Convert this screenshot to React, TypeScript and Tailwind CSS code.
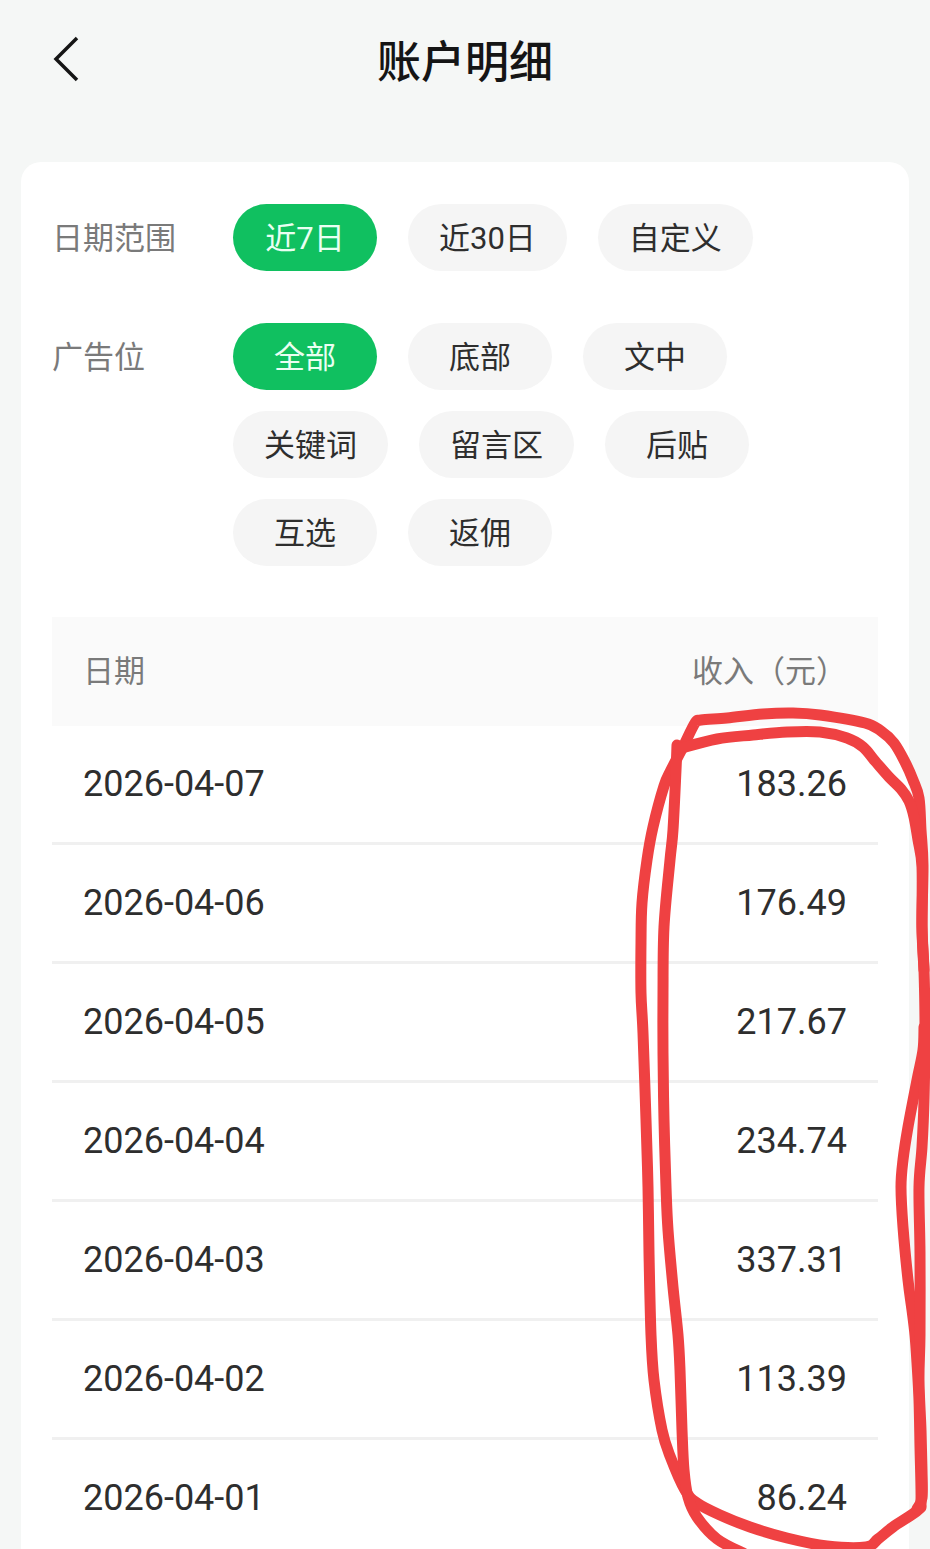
import { useState } from "react";
import clsx from "clsx";

type Point = [number, number];

const DATE_RANGES = ["近7日", "近30日", "自定义"];
const AD_SLOTS = ["全部", "底部", "文中", "关键词", "留言区", "后贴", "互选", "返佣"];

const ROWS = [
  { date: "2026-04-07", income: "183.26" },
  { date: "2026-04-06", income: "176.49" },
  { date: "2026-04-05", income: "217.67" },
  { date: "2026-04-04", income: "234.74" },
  { date: "2026-04-03", income: "337.31" },
  { date: "2026-04-02", income: "113.39" },
  { date: "2026-04-01", income: "86.24" },
];

// Two passes of the pen around the income column
const OUTER_LOOP: Point[] = [
  [924, 970], [922, 927], [923, 865], [921, 830], [919, 798], [913, 780], [905, 762], [894, 743],
  [881, 731], [865, 723], [820, 715], [793, 713], [763, 714], [727, 718], [701, 720], [695, 723],
  [683, 747], [671, 770], [664, 786], [653, 827], [647, 860], [642, 903], [641, 943], [641, 993],
  [643, 1033], [646, 1120], [648, 1187], [649, 1253], [651, 1335], [654, 1380], [662, 1430],
  [670, 1456], [685, 1490], [697, 1503], [720, 1515], [750, 1527], [787, 1538], [827, 1546],
  [866, 1547], [878, 1539], [893, 1527], [918, 1510], [921, 1500], [920, 1447], [919, 1400],
  [917, 1363], [915, 1335], [912, 1310], [908, 1280], [903, 1227], [901, 1187], [903, 1160],
  [908, 1127], [917, 1080], [923, 1050], [924, 1027],
];
const INNER_LOOP: Point[] = [
  [677, 745], [676, 770], [673, 830], [670, 860], [664, 927], [663, 993], [663, 1053], [664, 1120],
  [666, 1187], [668, 1230], [673, 1287], [678, 1335], [680, 1370], [682, 1430], [684, 1470],
  [688, 1497], [697, 1517], [717, 1539], [745, 1554],
];
const INNER_TOP: Point[] = [
  [678, 749], [717, 739], [753, 735], [787, 732], [820, 732], [847, 738], [863, 747], [875, 761],
  [889, 777], [901, 789], [909, 801], [914, 817], [918, 840], [922, 867], [922, 927], [924, 970],
  [925, 1027], [924, 1100], [922, 1147], [919, 1187], [920, 1253], [920, 1335], [919, 1380],
  [921, 1430], [922, 1470], [922, 1498], [917, 1509],
];

function smoothPath(points: Point[]): string {
  let d = `M${points[0][0]} ${points[0][1]}`;
  for (let i = 0; i < points.length - 1; i++) {
    const p0 = points[i - 1] ?? points[i];
    const p1 = points[i];
    const p2 = points[i + 1];
    const p3 = points[i + 2] ?? p2;
    d += ` C${p1[0] + (p2[0] - p0[0]) / 6} ${p1[1] + (p2[1] - p0[1]) / 6}`;
    d += ` ${p2[0] - (p3[0] - p1[0]) / 6} ${p2[1] - (p3[1] - p1[1]) / 6} ${p2[0]} ${p2[1]}`;
  }
  return d;
}

interface FilterProps {
  id: string;
  label: string;
  options: string[];
  value: string;
  onChange: (value: string) => void;
}

function Filter({ id, label, options, value, onChange }: FilterProps) {
  return (
    <div role="group" aria-labelledby={id} className="flex items-start">
      <span id={id} className="w-[181px] shrink-0 pt-0.5 text-[31px] leading-[65px] text-[#7a7a7a]">
        {label}
      </span>
      <div className="flex flex-wrap gap-x-[31px] gap-y-[21px]">
        {options.map((option) => (
          <button
            key={option}
            type="button"
            aria-pressed={option === value}
            onClick={() => onChange(option)}
            className={clsx(
              "min-w-36 px-[31px] pt-0.5 rounded-full text-[31px] leading-[65px] cursor-pointer",
              option === value ? "bg-[#10c060] text-[#eafff2]" : "bg-[#f5f5f5] text-[#2e2e2e]",
            )}
          >
            {option}
          </button>
        ))}
      </div>
    </div>
  );
}

export default function App() {
  const [dateRange, setDateRange] = useState("近7日");
  const [adSlot, setAdSlot] = useState("全部");

  return (
    <div className="min-h-screen overflow-hidden bg-[#f5f7f6] font-[Roboto,'Noto_Sans_CJK_SC',sans-serif]">
      <header className="grid grid-cols-[1fr_auto_1fr] items-center px-[52px] pt-[30px] pb-[66px]">
        <button type="button" aria-label="返回" className="justify-self-start pb-2 cursor-pointer">
          <svg width="28" height="46" viewBox="0 0 28 46" fill="none" stroke="#151515" strokeWidth="3.5">
            <path d="M25 2 4 23l21 21" />
          </svg>
        </button>
        <h1 className="text-[44px] leading-[66px] font-medium text-[#151515]">账户明细</h1>
      </header>

      <main className="mx-[21px] px-[31px] pt-[42px] rounded-t-[20px] bg-white">
        <div className="flex flex-col gap-[52px]">
          <Filter
            id="date-range"
            label="日期范围"
            options={DATE_RANGES}
            value={dateRange}
            onChange={setDateRange}
          />
          <Filter id="ad-slot" label="广告位" options={AD_SLOTS} value={adSlot} onChange={setAdSlot} />
        </div>

        <div className="relative mt-[51px]">
          <table className="w-full border-separate border-spacing-0">
            <thead>
              <tr className="h-[109px] bg-[#fafafa] text-[31px] text-[#7a7a7a]">
                <th scope="col" className="px-[31px] pt-0.5 text-left font-normal">日期</th>
                <th scope="col" className="px-[31px] pt-0.5 text-right font-normal">收入（元）</th>
              </tr>
            </thead>
            <tbody>
              {ROWS.map((row) => (
                <tr key={row.date} className="h-[119px] text-4xl text-[#2e2e2e]">
                  <td className="px-[31px] border-b-3 border-[#f0f0f0]">{row.date}</td>
                  <td className="px-[31px] border-b-3 border-[#f0f0f0] text-right">{row.income}</td>
                </tr>
              ))}
            </tbody>
          </table>

          {/* Red pen marking */}
          <svg
            aria-hidden="true"
            className="absolute top-[83px] -right-[52px] pointer-events-none"
            width="300"
            height="860"
            viewBox="630 700 300 860"
            fill="none"
            stroke="#ef4142"
            strokeWidth="11"
            strokeLinecap="round"
            strokeLinejoin="round"
          >
            <path d={smoothPath(OUTER_LOOP)} />
            <path d={smoothPath(INNER_LOOP)} />
            <path d={smoothPath(INNER_TOP)} />
          </svg>
        </div>
      </main>
    </div>
  );
}
